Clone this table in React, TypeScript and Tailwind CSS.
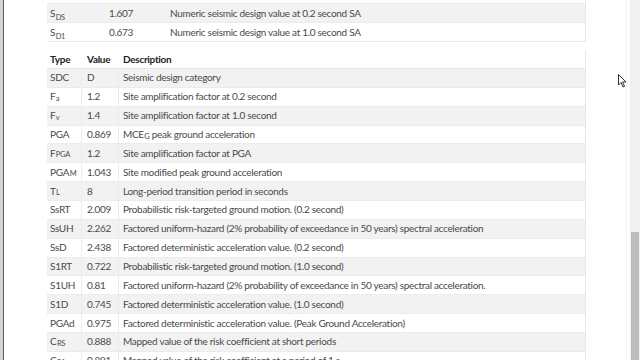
import React from "react";

type Row = { t: React.ReactNode; v: string; d: React.ReactNode };

const Sub = ({ children }: { children: React.ReactNode }) => (
  <sub className="text-[7.5px] align-[-2px] leading-none ml-[0.5px]">{children}</sub>
);

const rows: Row[] = [
  { t: "SDC", v: "D", d: "Seismic design category" },
  { t: <>F<Sub>a</Sub></>, v: "1.2", d: "Site amplification factor at 0.2 second" },
  { t: <>F<Sub>v</Sub></>, v: "1.4", d: "Site amplification factor at 1.0 second" },
  { t: "PGA", v: "0.869", d: <>MCE<Sub>G</Sub>{"\u00a0"}peak ground acceleration</> },
  { t: <>F<Sub>PGA</Sub></>, v: "1.2", d: "Site amplification factor at PGA" },
  { t: <>PGA<Sub>M</Sub></>, v: "1.043", d: "Site modified peak ground acceleration" },
  { t: <>T<Sub>L</Sub></>, v: "8", d: "Long-period transition period in seconds" },
  { t: "SsRT", v: "2.009", d: "Probabilistic risk-targeted ground motion. (0.2 second)" },
  { t: "SsUH", v: "2.262", d: "Factored uniform-hazard (2% probability of exceedance in 50 years) spectral acceleration" },
  { t: "SsD", v: "2.438", d: "Factored deterministic acceleration value. (0.2 second)" },
  { t: "S1RT", v: "0.722", d: "Probabilistic risk-targeted ground motion. (1.0 second)" },
  { t: "S1UH", v: "0.81", d: "Factored uniform-hazard (2% probability of exceedance in 50 years) spectral acceleration." },
  { t: "S1D", v: "0.745", d: "Factored deterministic acceleration value. (1.0 second)" },
  { t: "PGAd", v: "0.975", d: "Factored deterministic acceleration value. (Peak Ground Acceleration)" },
  { t: <>C<Sub>RS</Sub></>, v: "0.888", d: "Mapped value of the risk coefficient at short periods" },
  { t: <>C<Sub>R1</Sub></>, v: "0.891", d: "Mapped value of the risk coefficient at a period of 1 s" },
];

export default function App() {
  return (
    <div
      className="w-[640px] h-[360px] overflow-hidden bg-white flex text-[#4a4a4a]"
      style={{ fontFamily: "Lato, 'Open Sans', sans-serif" }}
    >
      {/* left window edge */}
      <div className="w-[3px] bg-[#d4d4d4] shrink-0" />
      <div className="w-[1px] bg-[#5a5a5a] shrink-0" />

      {/* content */}
      <div className="w-[582px] shrink-0 pl-[43px] flex flex-col text-[10px] tracking-[-0.3px]">
        {/* top table */}
        <div className="shrink-0 flex flex-col border-r border-[#e8e8e8]">
          <div className="shrink-0 h-[4px] bg-white border-b border-[#e8e8e8]" />
          <div className="shrink-0 h-[19px] flex items-center bg-[#f2f2f2] border-b border-[#ebebeb]">
            <div className="w-[57px] pl-[3px]">S<Sub>DS</Sub></div>
            <div className="w-[62px] pl-[5px]">1.607</div>
            <div className="pl-[4px]">Numeric seismic design value at 0.2 second SA</div>
          </div>
          <div className="shrink-0 h-[19px] flex items-center bg-white border-b border-[#ebebeb]">
            <div className="w-[57px] pl-[3px]">S<Sub>D1</Sub></div>
            <div className="w-[62px] pl-[5px]">0.673</div>
            <div className="pl-[4px]">Numeric seismic design value at 1.0 second SA</div>
          </div>
        </div>

        <div className="shrink-0 h-[8px]" />

        {/* main table */}
        <div className="shrink-0 flex flex-col border-r border-[#e8e8e8]">
          <div className="shrink-0 h-[19px] flex items-center bg-white border-b border-[#e6e6e6] font-bold text-[#222]">
            <div className="w-[35px] pl-[3px]">Type</div>
            <div className="w-[37px] pl-[5px]">Value</div>
            <div className="pl-[4px]">Description</div>
          </div>
          {rows.map((r, i) => (
            <div
              key={i}
              className={`h-[18.86px] shrink-0 flex items-stretch border-b border-[#ececec] ${
                i % 2 === 0 ? "bg-[#f2f2f2]" : "bg-white"
              }`}
            >
              <div className="w-[35px] shrink-0 pl-[3px] flex items-center border-r border-[#ececec]">{r.t}</div>
              <div className="w-[37px] shrink-0 pl-[5px] flex items-center border-r border-[#ececec]">{r.v}</div>
              <div className="pl-[4px] flex items-center whitespace-nowrap">{r.d}</div>
            </div>
          ))}
        </div>
      </div>

      {/* right margin */}
      <div className="flex-1 relative">
        <div className="absolute left-[40px] top-0 bottom-0 w-[1px] bg-[#f2f2f2]" />
        <svg className="absolute left-[32px] top-[74px]" width="9" height="14" viewBox="0 0 9 14">
          <path d="M0.5 0.5 L0.5 11 L3 8.5 L5 13 L6.5 12.3 L4.6 8 L8 8 Z" fill="#fff" stroke="#333" strokeWidth="1" />
        </svg>
      </div>

      {/* scrollbar */}
      <div className="w-[10px] shrink-0 bg-[#f0f0f0] flex flex-col">
        <div className="h-[232px] shrink-0" />
        <div className="flex-1 mx-[1px] bg-[#bdbdbd]" />
      </div>
    </div>
  );
}
